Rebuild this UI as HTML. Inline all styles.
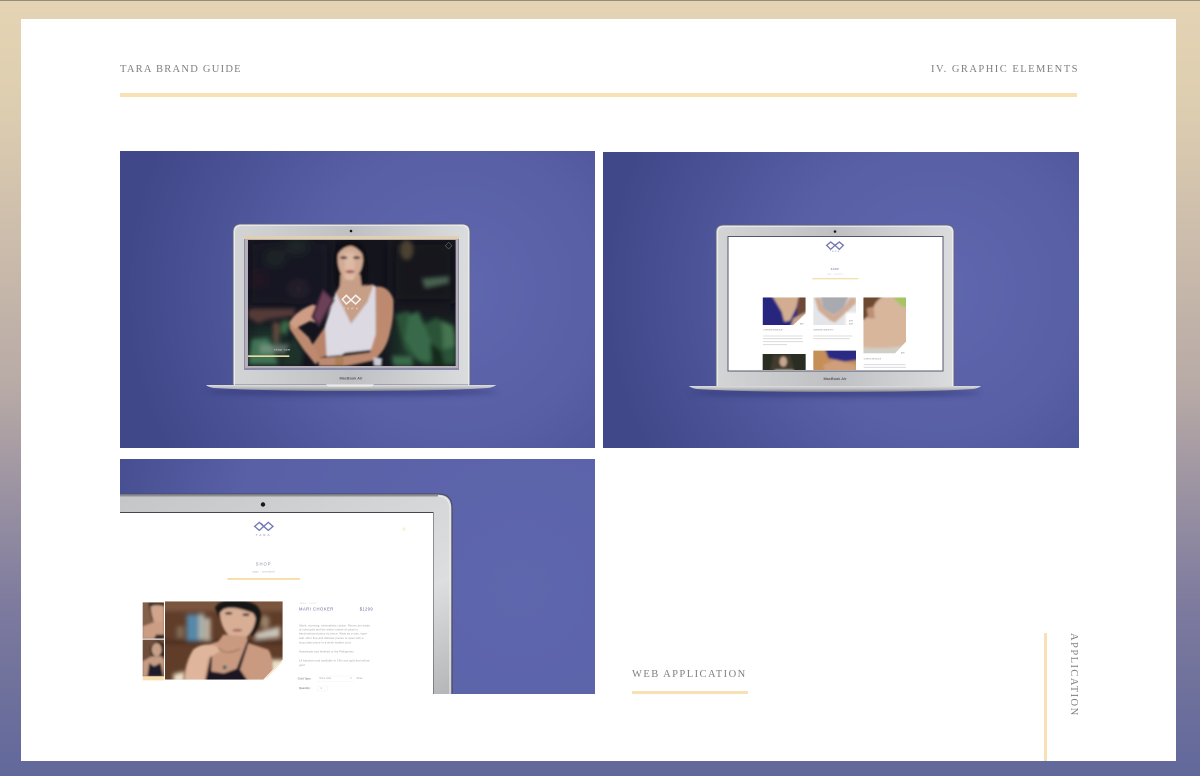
<!DOCTYPE html>
<html lang="en">
<head>
<meta charset="utf-8">
<title>Tara Brand Guide</title>
<style>
html,body{margin:0;padding:0}
body{width:1200px;height:776px;position:relative;overflow:hidden;background:linear-gradient(180deg,#e4d4b4 0%,#dfcfb1 12%,#b8aaa6 50%,#7d7a9e 78%,#61689b 100%);font-family:"Liberation Serif",serif}
.top{position:absolute;left:0;top:0;width:1200px;height:1px;background:#8f8c80}
.card{position:absolute;left:21px;top:19px;width:1155px;height:742px;background:#fff}
.t{position:absolute;color:#7f7f7f;font-size:10.5px;line-height:12px;white-space:nowrap;filter:blur(.3px)}
.g{position:absolute;background:#f8e2b5}
svg{position:absolute;left:0;top:0;filter:blur(.35px)}
</style>
</head>
<body>
<div class="top"></div>
<div class="card"></div>
<svg width="1200" height="776" viewBox="0 0 1200 776" xmlns="http://www.w3.org/2000/svg">
<defs>
<radialGradient id="pa" gradientUnits="userSpaceOnUse" cx="455" cy="290" r="330">
<stop offset="0" stop-color="#6067ae"/><stop offset=".45" stop-color="#585fa5"/><stop offset="1" stop-color="#40488a"/></radialGradient>
<radialGradient id="pb" gradientUnits="userSpaceOnUse" cx="935" cy="290" r="330">
<stop offset="0" stop-color="#6067ae"/><stop offset=".45" stop-color="#585fa5"/><stop offset="1" stop-color="#40488a"/></radialGradient>
<radialGradient id="pc" gradientUnits="userSpaceOnUse" cx="520" cy="590" r="420">
<stop offset="0" stop-color="#5e66ad"/><stop offset=".7" stop-color="#5960a6"/><stop offset="1" stop-color="#474f92"/></radialGradient>
<linearGradient id="lid" x1="0" x2="1" y1="0" y2="0">
<stop offset="0" stop-color="#d3d4d6"/><stop offset=".5" stop-color="#bfc0c3"/><stop offset="1" stop-color="#dbdcde"/></linearGradient>
<linearGradient id="lidc" x1="0" x2="1" y1="0" y2="1">
<stop offset="0" stop-color="#c4c5c7"/><stop offset=".7" stop-color="#dddedf"/><stop offset="1" stop-color="#b2b3b6"/></linearGradient>
<linearGradient id="base" x1="0" x2="0" y1="0" y2="1">
<stop offset="0" stop-color="#dcdddf"/><stop offset=".55" stop-color="#b6b7ba"/><stop offset="1" stop-color="#77798a"/></linearGradient>
<filter id="b1" x="-30%" y="-30%" width="160%" height="160%"><feGaussianBlur stdDeviation="3"/></filter>
<filter id="b2" x="-30%" y="-30%" width="160%" height="160%"><feGaussianBlur stdDeviation="6"/></filter>
<filter id="b3" x="-30%" y="-30%" width="160%" height="160%"><feGaussianBlur stdDeviation="20"/></filter>
<filter id="s" x="-5%" y="-300%" width="110%" height="700%"><feGaussianBlur stdDeviation="3"/></filter>
<clipPath id="ca"><rect x="9" y="12" width="623" height="378"/></clipPath>
<clipPath id="c1"><path d="M23 22H152V70L115 105H23Z"/></clipPath>
<clipPath id="c2"><path d="M175 22H303V105H175Z"/></clipPath>
<clipPath id="c3"><path d="M325 22H453V155L420 190H325Z"/></clipPath>
<clipPath id="c4"><path d="M23 192H152V240H23Z"/></clipPath>
<clipPath id="c5"><path d="M175 182H303V240H175Z"/></clipPath>
<clipPath id="t1"><rect x="8" y="13" width="64" height="109"/></clipPath>
<clipPath id="t2"><rect x="8" y="125" width="64" height="110"/></clipPath>
<clipPath id="cm"><path d="M75 10H428V185L370 245H75Z"/></clipPath>
<clipPath id="cp"><rect x="120" y="459" width="475" height="235"/></clipPath>
</defs>

<!-- PANEL A -->
<rect x="120" y="151" width="475" height="297" fill="url(#pa)"/>
<ellipse cx="351" cy="392" rx="146" ry="4" fill="#2c3270" opacity=".55" filter="url(#s)"/>
<path d="M233 385V232Q233 224 241 224H462Q470 224 470 232V385Z" fill="url(#lid)" stroke="#5e6479" stroke-width=".8"/>
<path d="M234.500 385V233Q234.500 225.500 241.500 225.500H461.500Q468.500 225.500 468.500 233V385" fill="none" stroke="#f0f0f1" stroke-width=".8"/>
<path d="M206 385H496Q494 387 488 388Q440 391 351 391Q262 391 214 388Q208 387 206 385Z" fill="url(#base)"/>
<path d="M326 384.500H374L372 386.500H328Z" fill="#eceded"/>
<circle cx="351" cy="231" r="1.300" fill="#15161c"/>
<text x="351" y="379.500" font-family="Liberation Sans,sans-serif" font-size="3.800" font-weight="bold" fill="#5a5a60" text-anchor="middle">MacBook Air</text>
<rect x="244" y="236" width="215" height="134" fill="#8b8daa"/>
<rect x="244" y="236" width="215" height="3" fill="#e2d0ad"/>
<rect x="245" y="239" width="213" height="129" fill="#b4afb8"/>
<g transform="translate(245 236) scale(.33333)">
  <g clip-path="url(#ca)">
    <rect x="9" y="12" width="623" height="378" fill="#14141d"/>
    <g filter="url(#b3)">
      <rect x="9" y="12" width="250" height="200" fill="#141622"/>
      <rect x="440" y="12" width="190" height="190" fill="#12151b"/>
      <ellipse cx="90" cy="65" rx="22" ry="10" fill="#2e3f32"/>
      <ellipse cx="155" cy="28" rx="30" ry="10" fill="#2e3f36"/>
      <ellipse cx="40" cy="130" rx="14" ry="12" fill="#3f2228"/>
      <ellipse cx="160" cy="160" rx="20" ry="10" fill="#443642"/>
      <rect x="440" y="250" width="190" height="140" fill="#1c3325"/>
      <rect x="9" y="270" width="120" height="120" fill="#1f3329"/>
    </g>
    <g filter="url(#b2)">
      <ellipse cx="485" cy="42" rx="20" ry="30" fill="#4b4330"/>
      <path d="M530 128L612 120L612 142L540 158Z" fill="#47604f"/>
      <path d="M9 218H150L150 240L70 250L40 262L9 245Z" fill="#553a38"/>
      <path d="M84 258L103 262L100 322L86 318Z" fill="#6b4c40"/>
      <path d="M450 235L490 225L530 270L575 245L632 290V385H540L480 345Z" fill="#2a5238"/>
      <path d="M490 240L520 225L555 310L585 375H520L480 310Z" fill="#376a48"/>
      <path d="M590 255L625 270L630 330L595 340Z" fill="#45754f"/>
      <path d="M555 320L590 345L600 390H560Z" fill="#17291f"/>
      <path d="M440 360L500 360L505 390H445Z" fill="#3a6a4b"/>
      <path d="M110 255L138 255L125 295L105 290Z" fill="#386a47"/>
      <path d="M20 310L70 305L100 385H10Z" fill="#3f7355"/>
      <path d="M45 325L140 325L140 350L45 352Z" fill="#93a697" opacity=".55"/>
      <path d="M150 300L175 350L170 390H110L120 340Z" fill="#1f3329"/>
    </g>
    <g filter="url(#b1)">
      <path d="M272 140Q262 60 280 25Q315 5 352 25Q375 80 362 145L345 175L290 170Z" fill="#0d0c12"/>
      <path d="M287 115H345L350 150L385 145L392 170L368 196L318 262L270 172L285 150Z" fill="#c79e86"/>
      <path d="M278 68Q278 28 315 24Q352 28 354 72Q352 112 322 132Q300 132 290 115Q278 95 278 68Z" fill="#d3ab94"/>
      <path d="M276 60Q285 20 315 20Q345 22 358 62Q335 30 315 30Q290 34 276 60Z" fill="#0d0c12"/>
      <rect x="300" y="50" width="28" height="82" fill="#e9cdb9" opacity=".45"/>
      <ellipse cx="296" cy="65" rx="11" ry="4" fill="#2c1f22"/>
      <ellipse cx="335" cy="65" rx="11" ry="4" fill="#2c1f22"/>
      <ellipse cx="315" cy="107" rx="14" ry="5" fill="#a85f5a"/>
      <path d="M245 265L200 330L212 368L245 360Z" fill="#b98469"/>
      <path d="M272 170L318 262L368 196L385 148L392 150L394 340L350 352L245 362L240 270Z" fill="#dcd9e2"/>
      <path d="M300 350L390 340L415 390H240Z" fill="#12121a"/>
      <path d="M392 152Q430 148 445 190Q448 240 436 285Q425 345 385 372L300 390H222L218 366L300 360L375 350L392 295Z" fill="#bd8a6f"/>
      <path d="M132 265L155 270L192 305L225 368L212 386L175 340L135 280Z" fill="#bd8a6f"/>
      <path d="M132 262Q150 225 205 205L232 225L218 262L195 255L170 268L150 278Z" fill="#cf9c84"/>
      <path d="M233 158L270 192L222 274L198 243Z" fill="#4a2a40"/>
      <path d="M234 168L260 192L222 260L208 242Z" fill="#6c3f57"/>
      <path d="M385 365L412 367L408 390H388Z" fill="#c9cad8"/>
      <rect x="270" y="362" width="26" height="26" fill="#ad7f55"/>
    </g>
  </g>
  <rect x="9" y="358" width="124" height="5" fill="#eadb9c"/>
  <text x="112" y="343" font-family="Liberation Sans,sans-serif" font-size="9" letter-spacing="1.500" fill="#e6e6e6" text-anchor="middle">shop now</text>
  <path d="M611 19L621 29L611 39L601 29Z" fill="none" stroke="#8e8f90" stroke-width="1.500"/>
  <g fill="none" stroke="#f6f2f2" stroke-width="4.500">
    <path d="M292 190L304 178L318 192L304 204Z"/><path d="M318 192L332 178L346 190L332 204Z"/>
  </g>
  <text x="320" y="220" font-family="Liberation Sans,sans-serif" font-size="9" letter-spacing="7" fill="#f5f0ee" text-anchor="middle">TARA</text>
</g>

<!-- PANEL B -->
<rect x="603" y="152" width="476" height="296" fill="url(#pb)"/>
<ellipse cx="835" cy="393" rx="146" ry="4" fill="#2c3270" opacity=".55" filter="url(#s)"/>
<path d="M716 387V232Q716 225 724 225H946Q954 225 954 232V387Z" fill="url(#lid)" stroke="#5e6479" stroke-width=".8"/>
<path d="M717.500 387V233Q717.500 226.500 724.500 226.500H945.500Q952.500 226.500 952.500 233V387" fill="none" stroke="#f0f0f1" stroke-width=".8"/>
<path d="M689 386H981Q979 388 973 389Q925 392 835 392Q745 392 697 389Q691 388 689 386Z" fill="url(#base)"/>
<circle cx="835" cy="231.500" r="1.300" fill="#15161c"/>
<text x="835" y="380" font-family="Liberation Sans,sans-serif" font-size="3.800" font-weight="bold" fill="#5a5a60" text-anchor="middle">MacBook Air</text>
<rect x="727.500" y="236" width="216" height="135.500" fill="#54566c"/>
<rect x="728.500" y="237" width="214" height="133.500" fill="#fff"/>
<g transform="translate(755 290) scale(.33333)">
  <g fill="none" stroke="#7277b4" stroke-width="4">
    <path d="M215 -134L227 -144L240 -134L227 -122Z"/><path d="M240 -134L253 -144L265 -134L253 -122Z"/>
  </g>
  <text x="240" y="-114" font-family="Liberation Sans,sans-serif" font-size="6" letter-spacing="4" fill="#8c8fb5" text-anchor="middle">TARA</text>
  <text x="240" y="-60" font-family="Liberation Sans,sans-serif" font-size="7" letter-spacing="1.500" font-weight="bold" fill="#8385ad" text-anchor="middle">SHOP</text>
  <text x="240" y="-46" font-family="Liberation Sans,sans-serif" font-size="5" letter-spacing="1" fill="#b5b5b5" text-anchor="middle">tags · pendant</text>
  <rect x="172" y="-36" width="138" height="4" fill="#f6dea9"/>

  <g clip-path="url(#c1)"><g filter="url(#b1)">
    <rect x="13" y="12" width="150" height="100" fill="#27287e"/>
    <path d="M130 12H165V90H125Z" fill="#6e4a38"/>
    <path d="M48 12H132L125 50L105 92L88 95L80 65Z" fill="#d2ad90"/>
    <path d="M115 85L165 60V115H105Z" fill="#c9a58d"/>
  </g></g>
  <g clip-path="url(#c2)"><g filter="url(#b1)">
    <rect x="165" y="12" width="150" height="100" fill="#e4e5e8"/>
    <path d="M195 12H285L265 55L235 75L205 55Z" fill="#a9a9b0"/>
    <path d="M178 22H195L205 55L235 76L265 55L285 22H303V40L265 75L240 98L225 92L190 62Z" fill="#d0ac94"/>
    <rect x="272" y="68" width="35" height="40" fill="#fff"/>
  </g></g>
  <g clip-path="url(#c3)"><g filter="url(#b1)">
    <rect x="315" y="12" width="150" height="185" fill="#d8b69c"/>
    <path d="M405 12H465V55L440 50Z" fill="#a6c466"/>
    <path d="M315 12H395Q370 25 358 45L352 70L325 90L315 90Z" fill="#6d4830"/>
    <path d="M315 170Q380 180 465 165V200H315Z" fill="#d0cec6"/>
    <path d="M335 55L355 50L360 85L340 85Z" fill="#bd9074"/>
  </g></g>
  <g clip-path="url(#c4)"><g filter="url(#b1)">
    <rect x="13" y="182" width="150" height="70" fill="#2a2f21"/>
    <path d="M55 195L105 195L120 250H45Z" fill="#3f3a2e"/>
    <ellipse cx="85" cy="215" rx="11" ry="15" fill="#c7a78e"/>
    <path d="M60 240L115 240V250H60Z" fill="#ccc3a8"/>
  </g></g>
  <g clip-path="url(#c5)"><g filter="url(#b1)">
    <rect x="165" y="172" width="150" height="75" fill="#c68f58"/>
    <path d="M208 172H310V210L270 215L220 205Z" fill="#2a2b84"/>
    <path d="M205 225L240 210L303 225V245H210Z" fill="#cf9f7c"/>
  </g></g>
  <g font-family="Liberation Sans,sans-serif" font-size="5" fill="#8e8e92">
    <text x="24" y="122">CONFIDENCE BRACELET</text>
    <text x="175" y="122">STATEMENT BRACELETS</text>
    <text x="326" y="208">SCENTED NECKLACE</text>
    <text x="135" y="104" font-size="4.500" fill="#777">$499</text>
    <text x="282" y="94" font-size="4.500" fill="#777">$ 399</text>
    <text x="282" y="104" font-size="4.500" fill="#777">$ 399</text>
    <text x="438" y="190" font-size="4.500" fill="#777">$299</text>
  </g>
  <g stroke="#d3d3d5" stroke-width="2.500">
    <path d="M24 138H143M24 146H142M24 155H144M24 164H96"/>
    <path d="M175 138H292M175 146H284"/>
    <path d="M326 224H451M326 232H453"/>
  </g>
</g>

<!-- PANEL C -->
<rect x="120" y="459" width="475" height="235" fill="url(#pc)"/>
<g clip-path="url(#cp)">
<path d="M110 494H438Q452 494 452 508V700H110Z" fill="url(#lidc)" stroke="#4c4f68" stroke-width="1.300"/>
<path d="M110 496H437Q450 496 450 509V700" fill="none" stroke="#eeeeef" stroke-width="1"/>
<rect x="110" y="494" width="328" height="2.500" fill="#77797f" opacity=".8"/>
<circle cx="263" cy="504.500" r="2.200" fill="#17181d"/>
<rect x="110" y="512" width="323.500" height="190" fill="#44454f"/>
</g>
<rect x="120" y="513" width="313" height="181" fill="#fff"/>
<g transform="translate(120 490) scale(.33333)">
  <g fill="none" stroke="#7277b4" stroke-width="4">
    <path d="M404 109L418 97L431 109L418 121Z"/><path d="M431 109L445 97L459 109L445 121Z"/>
    <path d="M424 100L438 116" stroke-width="3"/>
  </g>
  <text x="431" y="138" font-family="Liberation Sans,sans-serif" font-size="9" letter-spacing="6" fill="#8285b5" text-anchor="middle">TARA</text>
  <text x="431" y="226" font-family="Liberation Sans,sans-serif" font-size="12.500" letter-spacing="3" fill="#8385ad" text-anchor="middle">SHOP</text>
  <text x="431" y="247" font-family="Liberation Sans,sans-serif" font-size="8.500" letter-spacing="1" fill="#b0b0b4" text-anchor="middle">tags · pendant</text>
  <rect x="322" y="264" width="218" height="6" fill="#f8dfae"/>
  <g font-family="Liberation Sans,sans-serif">
    <text x="538" y="342" font-size="6.500" letter-spacing="1" fill="#d0d0d3">TARA · SHOP</text>
    <text x="537" y="362" font-size="12.500" letter-spacing="1.500" fill="#6a6c9a">MARI CHOKER</text>
    <text x="759" y="362" font-size="12.500" letter-spacing="1" fill="#6a6c9a" text-anchor="end">$1299</text>
    <g font-size="8.200" fill="#a2a2a6" letter-spacing=".35">
      <text x="537" y="409">Sleek, stunning, minimalistic choker. Pieces are made</text>
      <text x="537" y="421">of solid gold and the white mother-of-pearl is</text>
      <text x="537" y="434">hand-selected piece by piece. Wear as a solo, layer</text>
      <text x="537" y="447">with other fine and delicate pieces or wear with a</text>
      <text x="537" y="461">long chain piece in a sleek leather cord.</text>
      <text x="537" y="488">Handmade and finished in the Philippines.</text>
      <text x="537" y="515">14 karat/cts and available in 14k rose gold and yellow</text>
      <text x="537" y="528">gold.</text>
    </g>
    <text x="533" y="568" font-size="8" font-weight="bold" fill="#8f8f95">Gold Type:</text>
    <text x="598" y="567" font-size="7.500" fill="#b0b0b4">Rose Gold</text>
    <text x="691" y="567" font-size="7.500" fill="#a0a0a4">▾</text>
    <text x="710" y="567" font-size="7.500" fill="#a5a5a9">Rose</text>
    <text x="537" y="597" font-size="8" font-weight="bold" fill="#8f8f95">Quantity:</text>
    <text x="601" y="597" font-size="8" fill="#a0a0a4">1</text>
    <path d="M592 558H702M592 574H702M592 588H622V603H592Z" fill="none" stroke="#f3f3f3" stroke-width="1.500"/>
  </g>
  <circle cx="852" cy="117" r="5" fill="#fbf0d8"/>
</g>
<g transform="translate(140 598) scale(.33333)">
  <g clip-path="url(#t1)"><g filter="url(#b1)">
    <rect x="0" y="5" width="80" height="125" fill="#82604a"/>
    <path d="M25 14H72V40L60 70L35 65Z" fill="#2c211e"/>
    <path d="M32 25Q50 18 72 25V75L50 85Q35 65 32 25Z" fill="#d0a58c"/>
    <path d="M8 85L50 70L72 72V122H8Z" fill="#cb9e84"/>
    <path d="M42 122L48 110L72 110V122Z" fill="#23222a"/>
  </g></g>
  <g clip-path="url(#t2)"><g filter="url(#b1)">
    <rect x="0" y="120" width="80" height="120" fill="#6e4d3a"/>
    <path d="M30 150Q50 115 72 140V180L35 180Z" fill="#1d1515"/>
    <ellipse cx="50" cy="155" rx="15" ry="20" fill="#c9a088"/>
    <path d="M8 190L35 175H65L72 185V235H8Z" fill="#c59c84"/>
    <path d="M22 235L28 195L42 205L62 195L70 235Z" fill="#1f1f2b"/>
  </g></g>
  <rect x="8" y="235" width="64" height="12" fill="#f6dfaa"/>
  <g clip-path="url(#cm)">
    <rect x="65" y="0" width="375" height="255" fill="#5f3d29"/>
    <g filter="url(#b2)">
      <rect x="65" y="0" width="375" height="40" fill="#7a543c"/>
      <rect x="140" y="50" width="34" height="78" fill="#5488ab"/>
      <rect x="175" y="48" width="18" height="78" fill="#a9b5b1"/>
      <rect x="194" y="60" width="18" height="68" fill="#bdb0a0"/>
      <rect x="110" y="85" width="22" height="35" fill="#7f6a55"/>
      <ellipse cx="375" cy="72" rx="14" ry="20" fill="#98836a"/>
      <path d="M345 105L420 85V118L345 125Z" fill="#c9c3b8"/>
      <rect x="65" y="128" width="375" height="8" fill="#3f2618"/>
      <path d="M100 228L135 220V255H100Z" fill="#eadfc8"/>
      <path d="M390 185H440V255H370Z" fill="#eadfc8"/>
    </g>
    <g filter="url(#b1)">
      <path d="M225 30Q235 5 290 8Q360 8 362 50Q360 90 335 115L290 70L245 75Z" fill="#191212"/>
      <path d="M240 45Q255 22 290 25Q340 30 347 62Q342 100 315 122Q285 132 262 108Q240 80 240 45Z" fill="#d8ae95"/>
      <path d="M238 45Q258 12 345 48L335 22L260 20Z" fill="#191212"/>
      <ellipse cx="266" cy="46" rx="11" ry="4" fill="#35231f"/>
      <ellipse cx="318" cy="50" rx="11" ry="4" fill="#35231f"/>
      <ellipse cx="292" cy="97" rx="15" ry="4" fill="#a0605a"/>
      <path d="M250 110L320 115L325 135L385 155Q405 185 395 255H130Q135 190 160 155L235 130Z" fill="#c99a80"/>
      <path d="M160 155Q190 130 230 145L240 160L205 180L190 255H135Q140 190 160 155Z" fill="#dfb69c"/>
      <path d="M195 255L212 175L216 176L214 220L252 226L290 212L323 125L328 127L300 215L328 255Z" fill="#1c1921"/>
      <path d="M235 150Q260 175 300 152" fill="none" stroke="#77533f" stroke-width="2"/>
      <circle cx="254" cy="208" r="6" fill="#3d6a6c"/>
    </g>
  </g>
  <path d="M428 185L370 245H428Z" fill="#fff"/>
  <path d="M380 240L426 190" stroke="#f6e5c0" stroke-width="3"/>
</g>
</svg>
<div class="t" style="left:120px;top:64px;letter-spacing:1.25px">TARA BRAND GUIDE</div>
<div class="t" style="left:931px;top:64px;letter-spacing:1.47px">IV. GRAPHIC ELEMENTS</div>
<div class="g" style="left:120px;top:93px;width:957px;height:4px"></div>
<div class="t" style="left:632px;top:669px;letter-spacing:1.44px">WEB APPLICATION</div>
<div class="g" style="left:632px;top:691px;width:116px;height:3px"></div>
<div class="g" style="left:1044px;top:633px;width:3px;height:128px"></div>
<div class="t" style="left:1067px;top:633px;letter-spacing:1.45px;writing-mode:vertical-rl">APPLICATION</div>
</body>
</html>
